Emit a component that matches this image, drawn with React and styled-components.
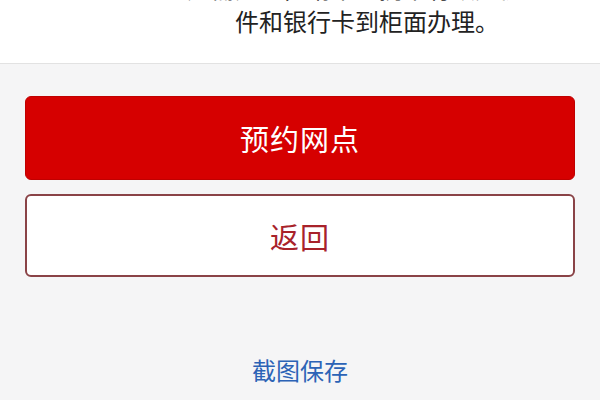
import styled, { createGlobalStyle } from "styled-components";

const GlobalStyle = createGlobalStyle`
    html, body {
        margin: 0;
        padding: 0;
        background: #f5f5f6;
    }
    body {
        font-family: "Noto Sans CJK SC", "Noto Sans", sans-serif;
    }
`;

const Page = styled.div`
    width: 600px;
    height: 400px;
    overflow: hidden;
    display: flex;
    flex-direction: column;
    background: #f5f5f6;
`;

const Notice = styled.div`
    height: 63px;
    overflow: hidden;
    background: #ffffff;
    border-bottom: 1px solid #e2e2e2;
    padding-left: 134px;
`;

const NoticeText = styled.p`
    margin: -29px 0 0;
    font-size: 24px;
    line-height: 33px;
    color: #222222;
    text-align: center;
`;

const Actions = styled.div`
    display: flex;
    flex-direction: column;
    gap: 14px;
    padding: 32px 25px 0;
`;

const Button = styled.button`
    height: ${(p) => (p.$primary ? "84px" : "83px")};
    width: 100%;
    border-radius: 6px;
    font-family: "Noto Sans CJK SC", sans-serif;
    font-size: 29px;
    letter-spacing: 1px;
    cursor: pointer;
    background: ${(p) => (p.$primary ? "#d60000" : "#ffffff")};
    color: ${(p) => (p.$primary ? "#ffffff" : "#a8222a")};
    border: ${(p) => (p.$primary ? "1px solid #c00000" : "2px solid #8a4347")};
`;

const Footer = styled.div`
    flex: 1;
    display: flex;
    align-items: center;
    justify-content: center;
    padding-top: 62px;
`;

const LinkText = styled.a`
    font-size: 24px;
    color: #2c63b6;
    text-decoration: none;
`;

function App() {
    return (
        <Page>
            <GlobalStyle />
            <Notice>
                <NoticeText>
                    如需办理，请本人携带有效身份证
                    <br />
                    件和银行卡到柜面办理。
                </NoticeText>
            </Notice>
            <Actions>
                <Button $primary>预约网点</Button>
                <Button>返回</Button>
            </Actions>
            <Footer>
                <LinkText>截图保存</LinkText>
            </Footer>
        </Page>
    );
}

export default App;
